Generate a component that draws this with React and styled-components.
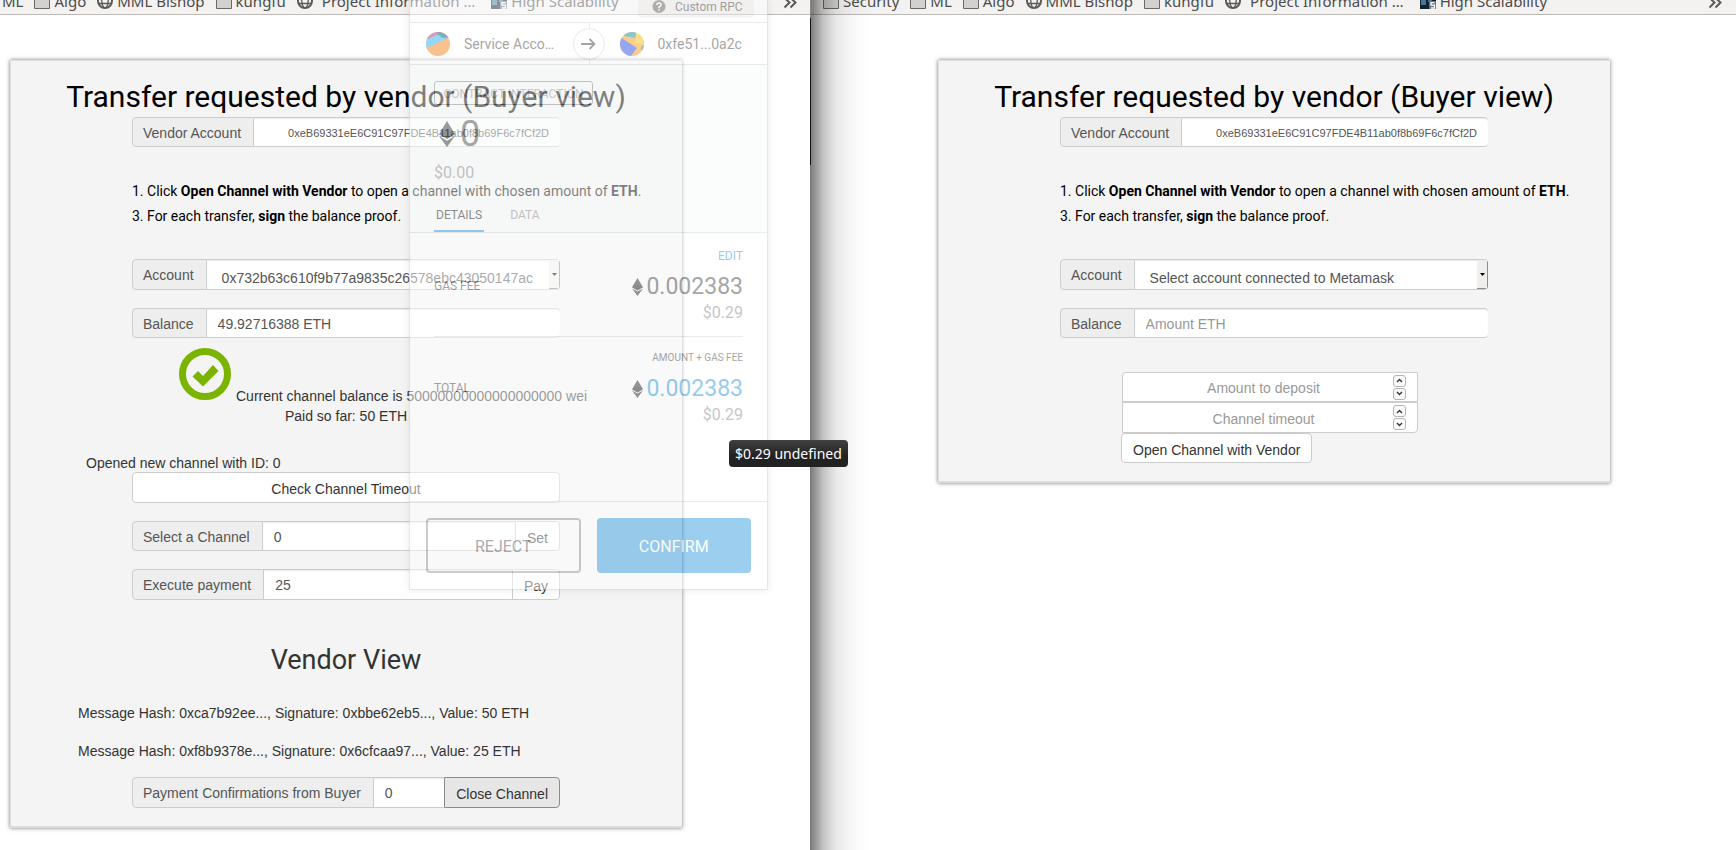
import React from "react";
import styled, { createGlobalStyle, css } from "styled-components";

const helvetica = `"Liberation Sans", Arial, sans-serif`;
const roboto = `Roboto, "Noto Sans", sans-serif`;
const ubuntu = `"Noto Sans", "Open Sans", sans-serif`;

const GlobalStyle = createGlobalStyle`
  *, *::before, *::after { box-sizing: border-box; }
  html, body { margin: 0; padding: 0; }
  body { background: #fff; color: #333; font: 14px/20px ${helvetica}; }
  button, input, select { font: inherit; margin: 0; }
  h1, h2, p, ol, ul { margin: 0; padding: 0; font-weight: 400; list-style: none; }
`;

const Desktop = styled.div`
  position: relative;
  display: grid;
  grid-template-columns: 811fr 925fr;
  min-height: 100vh;
  overflow: hidden;
`;

const BrowserWindow = styled.section`
  position: relative;
  min-width: 0;
  overflow: hidden;
  background: #fff;
`;

const WindowEdge = styled.div`
  position: absolute;
  inset: 0 0 0 auto;
  width: 1px;
  background: linear-gradient(#8a8886 18px, #111 18px, #111 165px, #777 165px);
`;

const WindowShade = styled.div`
  position: absolute;
  inset: 0 auto 0 0;
  width: 60px;
  pointer-events: none;
  background: linear-gradient(
    to right,
    rgba(0, 0, 0, 0.5),
    rgba(0, 0, 0, 0.24) 12px,
    rgba(0, 0, 0, 0.09) 25px,
    rgba(0, 0, 0, 0.03) 40px,
    rgba(0, 0, 0, 0)
  );
`;

const BookmarkBar = styled.nav`
  display: flex;
  align-items: flex-end;
  gap: 11px;
  height: 15px;
  padding: 0 14px 3px ${(p) => p.$start}px;
  overflow: hidden;
  background: #f3f2f1;
  border-bottom: 1px solid #bbb8b5;
`;

const Bookmark = styled.a`
  display: flex;
  align-items: center;
  flex: none;
  gap: ${(p) => (p.$wide ? 9 : 4)}px;
  margin-right: ${(p) => (p.$wide ? 5 : 0)}px;
  color: #4c4c4c;
  font: 15px/20px ${ubuntu};
  text-decoration: none;
`;

const MoreButton = styled.button`
  margin-left: auto;
  padding: 0;
  border: 0;
  background: none;
  height: 20px;
  svg { display: block; }
`;

const FolderIcon = () => (
  <svg width="16" height="16" viewBox="0 0 16 16" aria-hidden="true">
    <path d="M.5 2.5h6l1 2h8v11H.5z" fill="#d2d1cf" stroke="#6b6966" />
  </svg>
);

const GlobeIcon = () => (
  <svg width="16" height="16" viewBox="0 0 16 16" fill="none" stroke="#5c5a57" aria-hidden="true">
    <circle cx="8" cy="8" r="7" strokeWidth="2" />
    <ellipse cx="8" cy="8" rx="3.2" ry="6.8" strokeWidth="1.3" />
    <path d="M1.5 5.5h13M1.5 10.5h13" strokeWidth="1.3" />
  </svg>
);

const ScalabilityIcon = () => (
  <svg width="16" height="16" viewBox="0 0 16 16" aria-hidden="true">
    <path d="M0 0h16v16H0z" fill="#17212b" />
    <path d="M1 2h5v10H1zM8 0h4v9H8z" fill="#3f7896" />
    <path d="M9 8h7v8H9z" fill="#66737c" />
    <path d="M14.5 9.700h-3.500v2.500h3.500V15H11" fill="none" stroke="#fff" strokeWidth="1.3" />
  </svg>
);

const bookmarkIcons = { folder: FolderIcon, globe: GlobeIcon, site: ScalabilityIcon };

const bookmarks = [
  { label: "Security", icon: "folder" },
  { label: "ML", icon: "folder" },
  { label: "Algo", icon: "folder" },
  { label: "MML Bishop", icon: "globe" },
  { label: "kungfu", icon: "folder" },
  { label: "Project Information …", icon: "globe", wide: true },
  { label: "High Scalability", icon: "site" },
];

function Bookmarks({ start, items }) {
  return (
    <BookmarkBar $start={start} aria-label="Bookmarks">
      {items.map(({ label, icon, wide }) => {
        const Icon = bookmarkIcons[icon];
        return (
          <Bookmark key={label} href="#" $wide={wide}>
            {Icon && <Icon />}
            {label}
          </Bookmark>
        );
      })}
      <MoreButton aria-label="More bookmarks">
        <svg width="14" height="20" viewBox="0 0 14 20" fill="none" stroke="#5c5a57" strokeWidth="2">
          <path d="M1.5 7l5 4.500-5 5M7.500 7l5 4.500-5 5" />
        </svg>
      </MoreButton>
    </BookmarkBar>
  );
}

const Card = styled.main`
  width: calc(100% - ${(p) => p.$start}px);
  max-width: 672px;
  margin: 45px 0 22px ${(p) => p.$start}px;
  padding: 19px 20px 20px;
  background: #f4f4f4;
  box-shadow: inset 0 -2px #dcdcdc, inset 1px 1px #e0e0e0, 0 0 4px rgba(0, 0, 0, 0.55);
`;

const Title = styled.h1`
  color: #000;
  font: 30px/36px ${roboto};
  text-align: center;
  white-space: nowrap;
  margin-bottom: 2px;
`;

const Column = styled.div`
  max-width: 428px;
  margin: 0 auto;
`;

const Steps = styled.ol`
  margin: 32px 0 30px;
  color: #000;
  font: 14px/25px ${roboto};
  white-space: nowrap;
`;

const Group = styled.div`
  display: flex;
  height: ${(p) => (p.$tall ? 31 : 30)}px;
  margin-bottom: 18px;
  &:last-child { margin-bottom: 0; }
`;

const Addon = styled.label`
  display: flex;
  align-items: center;
  flex: none;
  padding: 1px 12px 0 10px;
  background: #eee;
  border: 1px solid #ccc;
  border-radius: 4px 0 0 4px;
  color: #555;
`;

const field = css`
  min-width: 0;
  flex: 1;
  background: #fff;
  border: solid #ccc;
  border-width: 1px 0;
  box-shadow: inset 0 1px 1px rgba(0, 0, 0, 0.08);
  color: #555;
`;

const Field = styled.input`
  ${field}
  padding: 1px 11px 0;
  border-radius: ${(p) => (p.$joined ? "0" : "0 4px 4px 0")};
  outline: none;
  &::placeholder { color: #999; opacity: 1; }
`;

const AddressField = styled(Field)`
  font-size: 11px;
  text-align: right;
`;

const SelectBox = styled.div`
  ${field}
  display: flex;
  border-radius: 0 4px 4px 0;
  overflow: hidden;
`;

const Select = styled.select`
  appearance: none;
  flex: 1;
  min-width: 0;
  margin-right: 11px;
  padding: 6px 0 0 15px;
  border: 0;
  background: none;
  color: inherit;
  outline: none;
`;

const SelectArrow = styled.span`
  display: flex;
  align-items: center;
  justify-content: center;
  width: 11px;
  background: #f0efee;
  border: solid #8e8c8a;
  border-width: 0 1px 1px 0;
`;

const Button = styled.button`
  flex: none;
  padding: 3px 11px 0;
  height: ${(p) => (p.$tall ? 31 : 30)}px;
  background: ${(p) => (p.$active ? "#e6e6e6" : "#fff")};
  border: 1px solid ${(p) => (p.$active ? "#8c8c8c" : "#ccc")};
  border-radius: ${(p) => (p.$joined ? "0 4px 4px 0" : "4px")};
  width: ${(p) => (p.$block ? "100%" : "auto")};
  color: #333;
`;

const StatusRow = styled.div`
  display: flex;
  align-items: flex-end;
  gap: 5px;
  height: 58px;
  margin: 10px 0 0 149px;
  white-space: nowrap;
  svg { align-self: flex-start; flex: none; }
`;

const Paid = styled.p`
  text-align: center;
  margin-bottom: 27px;
`;

const Note = styled.p`
  margin-left: ${(p) => p.$indent}px;
  margin-bottom: ${(p) => p.$below}px;
`;

const SubTitle = styled.h2`
  margin: 43px 0 26px;
  font: 27px/34px ${roboto};
  text-align: center;
`;

const Deposit = styled.div`
  display: flex;
  flex-direction: column;
  align-items: flex-start;
  margin: 34px 70px 0 61px;
`;

const NumberBox = styled.div`
  display: flex;
  align-items: center;
  align-self: stretch;
  height: ${(p) => (p.$tall ? 31 : 30)}px;
  margin-left: 1px;
  padding: 0 11px;
  background: #fff;
  border: 1px solid #ccc;
  border-radius: ${(p) => (p.$tall ? "0 0 4px 0" : "4px 0 0 0")};
`;

const NumberInput = styled.input`
  appearance: textfield;
  flex: 1;
  min-width: 0;
  padding: 2px 0 0;
  border: 0;
  outline: none;
  background: none;
  color: #555;
  text-align: center;
  &::placeholder { color: #999; opacity: 1; }
  &::-webkit-inner-spin-button { appearance: none; }
`;

const Spinner = styled.div`
  display: flex;
  flex-direction: column;
  gap: 1px;
`;

const SpinButton = styled.button`
  display: grid;
  place-items: center;
  width: 13px;
  height: 12px;
  padding: 0;
  background: #fafafa;
  border: 1px solid #b4b4b4;
  border-radius: 3px;
`;

function NumberField({ label, tall }) {
  return (
    <NumberBox $tall={tall}>
      <NumberInput type="number" placeholder={label} aria-label={label} />
      <Spinner>
        <SpinButton aria-label={`Increase ${label}`}>
          <svg width="7" height="5" viewBox="0 0 7 5" fill="none" stroke="#333" strokeWidth="1.4"><path d="M1 4l2.500-2.500L6 4" /></svg>
        </SpinButton>
        <SpinButton aria-label={`Decrease ${label}`}>
          <svg width="7" height="5" viewBox="0 0 7 5" fill="none" stroke="#333" strokeWidth="1.4"><path d="M1 1l2.500 2.500L6 1" /></svg>
        </SpinButton>
      </Spinner>
    </NumberBox>
  );
}

const Popup = styled.aside`
  position: absolute;
  top: 0;
  left: 409px;
  width: 359px;
  background: #fff;
  border: solid #d0d0d0;
  border-width: 0 1px 1px;
  box-shadow: 0 0 7px rgba(0, 0, 0, 0.14);
  color: #4d4d4d;
  font: 14px/20px ${roboto};
  opacity: 0.5;
`;

const PopupHeader = styled.header`
  display: flex;
  justify-content: flex-end;
  height: 23px;
  padding-right: 13px;
  border-bottom: 1px solid #d2d8dd;
`;

const Network = styled.div`
  display: flex;
  align-items: flex-start;
  gap: 9px;
  width: 116px;
  height: 18px;
  padding-left: 14px;
  background: #f0efee;
  border-radius: 0 0 4px 4px;
  font-size: 12px;
  line-height: 14px;
`;

const Parties = styled.div`
  position: relative;
  display: grid;
  grid-template-columns: 1fr 1fr;
  height: 42px;
  border-bottom: 1px solid #d2d8dd;
`;

const Party = styled.div`
  display: flex;
  align-items: center;
  gap: 14px;
  padding-left: ${(p) => (p.$to ? 30 : 16)}px;
  border-left: ${(p) => (p.$to ? "1px solid #d2d8dd" : "0")};
`;

const PartyArrow = styled.div`
  position: absolute;
  inset: 5px 0 auto;
  margin: 0 auto;
  display: grid;
  place-items: center;
  width: 32px;
  height: 32px;
  background: #fff;
  border: 1px solid #d6d6d6;
  border-radius: 50%;
`;

const Summary = styled.div`
  padding: 16px 24px 0;
  background: #f9fbfb;
  border-bottom: 1px solid #d2d8dd;
`;

const Pill = styled.div`
  width: 159px;
  height: 24px;
  padding-top: 1px;
  border: 1px solid #8a8f94;
  border-radius: 3px;
  color: #9a9a9a;
  font-size: 12px;
  line-height: 22px;
  text-align: center;
`;

const Amount = styled.div`
  display: flex;
  align-items: center;
  gap: ${(p) => (p.$large ? 5 : 3)}px;
  margin-top: 9px;
  padding-left: ${(p) => (p.$large ? 5 : 0)}px;
  color: ${(p) => (p.$blue ? "#2f9ae0" : "#4d4d4d")};
  font-size: ${(p) => (p.$large ? 36 : 23)}px;
  line-height: ${(p) => (p.$large ? 40 : 28)}px;
`;

const Fiat = styled.div`
  margin-top: ${(p) => p.$above}px;
  color: #8c8e94;
  font-size: 16px;
  line-height: 20px;
`;

const Tabs = styled.div`
  display: flex;
  gap: 24px;
  margin-top: 24px;
`;

const Tab = styled.button`
  padding: 0 2px 7px;
  background: none;
  border: 0;
  border-bottom: 2px solid ${(p) => (p.$on ? "#2f9ae0" : "transparent")};
  color: ${(p) => (p.$on ? "#222" : "#8c8e94")};
  font-size: 12px;
  line-height: 16px;
`;

const FeeRow = styled.div`
  display: flex;
  align-items: center;
  justify-content: space-between;
  margin: 0 24px;
  padding: ${(p) => (p.$last ? "13px 0 76px" : "15px 0 13px")};
  border-bottom: ${(p) => (p.$last ? "0" : "1px solid #d2d8dd")};
  font-size: 12px;
  line-height: 16px;
`;

const FeeValue = styled.div`
  display: flex;
  flex-direction: column;
  align-items: flex-end;
`;

const EditLink = styled.a`
  color: #2f9ae0;
  text-decoration: none;
`;

const FeeCaption = styled.span`
  font-size: 10px;
`;

const PopupFooter = styled.footer`
  display: grid;
  grid-template-columns: 1fr 1fr;
  gap: 16px;
  padding: 16px;
  border-top: 1px solid #d2d8dd;
`;

const PopupButton = styled.button`
  height: 55px;
  padding-top: 3px;
  background: ${(p) => (p.$primary ? "#3b9fe2" : "transparent")};
  border: 2px solid ${(p) => (p.$primary ? "#3b9fe2" : "#999")};
  border-radius: 4px;
  color: ${(p) => (p.$primary ? "#fff" : "#5b5b5b")};
  font-size: 16px;
`;

const Tooltip = styled.div`
  position: absolute;
  top: 440px;
  left: 729px;
  padding: 4px 6px 3px;
  background: linear-gradient(#404040, #222 60%);
  border-radius: 4px;
  color: #fff;
  font: 14px/20px ${ubuntu};
`;

const EthIcon = ({ width, height }) => (
  <svg width={width} height={height} viewBox="0 0 16 26" aria-hidden="true">
    <path d="M8 0l8 13.200-8 4.800-8-4.800z" fill="#333" />
    <path d="M0 15l8 4.700L16 15 8 26z" fill="#333" />
    <path d="M8 9.500l8 3.700-8 4.800-8-4.800z" fill="#111" opacity=".4" />
  </svg>
);

const SenderIcon = () => (
  <svg width="24" height="24" viewBox="0 0 24 24" aria-hidden="true">
    <clipPath id="sender"><circle cx="12" cy="12" r="12" /></clipPath>
    <g clipPath="url(#sender)">
      <path d="M0 0h24v24H0z" fill="#f5841f" />
      <path d="M0 16L24 5V0H0z" fill="#24b5f2" />
      <path d="M0 8L13 2l7 5 4-3V0H0z" fill="#c83082" />
      <path d="M11 2l6 4 7-2V0H12z" fill="#03666a" />
      <path d="M13 3l4 3 7-4-4-2z" fill="#03666a" />
    </g>
  </svg>
);

const ReceiverIcon = () => (
  <svg width="24" height="24" viewBox="0 0 24 24" aria-hidden="true">
    <clipPath id="receiver"><circle cx="12" cy="12" r="12" /></clipPath>
    <g clipPath="url(#receiver)">
      <path d="M0 0h24v24H0z" fill="#fa9a1c" />
      <path d="M4 4l12 2V0H4z" fill="#188e9c" />
      <path d="M16 0h8v13l-9-2z" fill="#f5c01a" />
      <path d="M0 5l17 11-6 8H0z" fill="#3152e0" />
      <path d="M22 14l2-1v5h-3z" fill="#188e9c" />
    </g>
  </svg>
);

function MetaMaskPopup() {
  return (
    <Popup>
      <PopupHeader>
        <Network>
          <svg width="14" height="14" viewBox="0 0 14 14" aria-hidden="true">
            <circle cx="7" cy="6.500" r="6.500" fill="#6b6b6b" />
            <path d="M4.800 5q.2-2 2.200-2t2.200 1.800Q9.200 6 7 7v1.200M7 9.300v1.500" fill="none" stroke="#fff" strokeWidth="1.500" />
          </svg>
          Custom RPC
        </Network>
      </PopupHeader>
      <Parties>
        <Party><SenderIcon />Service Acco…</Party>
        <Party $to><ReceiverIcon />0xfe51...0a2c</Party>
        <PartyArrow>
          <svg width="15" height="12" viewBox="0 0 15 12" fill="none" stroke="#4d4d4d" strokeWidth="1.800" aria-hidden="true">
            <path d="M0 6h13.500M8.500 1l5 5-5 5" />
          </svg>
        </PartyArrow>
      </Parties>
      <Summary>
        <Pill>CONTRACT INTERACTION</Pill>
        <Amount $large><EthIcon width={16} height={26} />0</Amount>
        <Fiat $above={9}>$0.00</Fiat>
        <Tabs>
          <Tab $on>DETAILS</Tab>
          <Tab>DATA</Tab>
        </Tabs>
      </Summary>
      <FeeRow>
        <span>GAS FEE</span>
        <FeeValue>
          <EditLink href="#">EDIT</EditLink>
          <Amount><EthIcon width={11} height={18} />0.002383</Amount>
          <Fiat $above={2}>$0.29</Fiat>
        </FeeValue>
      </FeeRow>
      <FeeRow $last>
        <span>TOTAL</span>
        <FeeValue>
          <FeeCaption>AMOUNT + GAS FEE</FeeCaption>
          <Amount $blue><EthIcon width={11} height={18} />0.002383</Amount>
          <Fiat $above={2}>$0.29</Fiat>
        </FeeValue>
      </FeeRow>
      <PopupFooter>
        <PopupButton>REJECT</PopupButton>
        <PopupButton $primary>CONFIRM</PopupButton>
      </PopupFooter>
    </Popup>
  );
}

function TransferIntro({ id }) {
  return (
    <>
      <Title>Transfer requested by vendor (Buyer view)</Title>
      <Column>
        <Group>
          <Addon htmlFor={`${id}-vendor`}>Vendor Account</Addon>
          <AddressField id={`${id}-vendor`} readOnly value="0xeB69331eE6C91C97FDE4B11ab0f8b69F6c7fCf2D" />
        </Group>
        <Steps>
          <li>1. Click <b>Open Channel with Vendor</b> to open a channel with chosen amount of <b>ETH</b>.</li>
          <li>3. For each transfer, <b>sign</b> the balance proof.</li>
        </Steps>
      </Column>
    </>
  );
}

function AccountFields({ id, account, balance }) {
  return (
    <>
      <Group $tall>
        <Addon htmlFor={`${id}-account`}>Account</Addon>
        <SelectBox>
          <Select id={`${id}-account`}><option>{account}</option></Select>
          <SelectArrow aria-hidden="true">
            <svg width="5" height="3" viewBox="0 0 5 3"><path d="M0 0h5L2.500 3z" fill="#000" /></svg>
          </SelectArrow>
        </SelectBox>
      </Group>
      <Group>
        <Addon htmlFor={`${id}-balance`}>Balance</Addon>
        <Field id={`${id}-balance`} placeholder="Amount ETH" defaultValue={balance} />
      </Group>
    </>
  );
}

export default function App() {
  return (
    <>
      <GlobalStyle />
      <Desktop>
        <BrowserWindow>
          <Bookmarks start={2} items={[{ label: "ML" }, ...bookmarks.slice(2)]} />
          <Card $start={10}>
            <TransferIntro id="buyer" />
            <Column>
              <AccountFields id="buyer" account="0x732b63c610f9b77a9835c26578ebc43050147ac" balance="49.92716388 ETH" />
            </Column>
            <StatusRow>
              <svg width="52" height="52" viewBox="0 0 52 52" aria-hidden="true">
                <circle cx="26" cy="26" r="22.500" fill="none" stroke="#7ab300" strokeWidth="7" />
                <path d="M13.500 28.500l5.500-5.500 5 5L34 17l5.500 6L24 38.500z" fill="#7ab300" />
              </svg>
              <span>Current channel balance is 50000000000000000000 wei</span>
            </StatusRow>
            <Paid>Paid so far: 50 ETH</Paid>
            <Note $indent={56} $below={-1}>Opened new channel with ID: 0</Note>
            <Column>
              <Group $tall><Button $block $tall>Check Channel Timeout</Button></Group>
              <Group>
                <Addon htmlFor="channel">Select a Channel</Addon>
                <Field id="channel" defaultValue="0" $joined />
                <Button $joined>Set</Button>
              </Group>
              <Group $tall>
                <Addon htmlFor="payment">Execute payment</Addon>
                <Field id="payment" defaultValue="25" $joined />
                <Button $joined $tall>Pay</Button>
              </Group>
            </Column>
            <SubTitle>Vendor View</SubTitle>
            <Note $indent={48} $below={18}>Message Hash: 0xca7b92ee..., Signature: 0xbbe62eb5..., Value: 50 ETH</Note>
            <Note $indent={48} $below={16}>Message Hash: 0xf8b9378e..., Signature: 0x6cfcaa97..., Value: 25 ETH</Note>
            <Column>
              <Group $tall>
                <Addon htmlFor="confirmations">Payment Confirmations from Buyer</Addon>
                <Field id="confirmations" defaultValue="0" $joined />
                <Button $joined $tall $active>Close Channel</Button>
              </Group>
            </Column>
          </Card>
          <WindowEdge />
        </BrowserWindow>
        <BrowserWindow>
          <Bookmarks start={12} items={bookmarks} />
          <Card $start={127}>
            <TransferIntro id="vendor" />
            <Column>
              <AccountFields id="vendor" account="Select account connected to Metamask" />
              <Deposit>
                <NumberField label="Amount to deposit" />
                <NumberField label="Channel timeout" tall />
                <Button>Open Channel with Vendor</Button>
              </Deposit>
            </Column>
          </Card>
          <WindowShade />
        </BrowserWindow>
        <MetaMaskPopup />
        <Tooltip role="tooltip">$0.29 undefined</Tooltip>
      </Desktop>
    </>
  );
}
